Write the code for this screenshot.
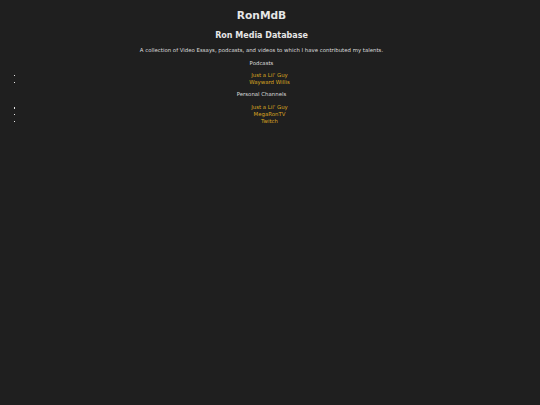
import React from "react";

function Item({ children }: { children: React.ReactNode }) {
  return (
    <li className="relative before:absolute before:left-[-2.5px] before:top-[3px] before:h-[1.5px] before:w-[1.5px] before:bg-[#e6e6e6] before:content-['']">
      <a className="text-[#daa520]">{children}</a>
    </li>
  );
}

export default function App() {
  return (
    <div className="min-h-[405px] bg-[#1f1f1f] text-[#e6e6e6]" style={{ fontFamily: '"DejaVu Sans", Verdana, sans-serif' }}>
      <div className="w-[523px] text-center pt-[10px]">
        <h1 className="text-[10.67px] font-bold leading-[12px]">RonMdB</h1>
        <h2 className="mt-[8.5px] text-[8px] font-bold leading-[10px]">Ron Media Database</h2>
        <p className="mt-[6.5px] text-[5.4px] leading-[7px] text-[#dcdcdc]">A collection of Video Essays, podcasts, and videos to which I have contributed my talents.</p>
        <p className="mt-[5.5px] text-[5.4px] leading-[7px] text-[#dcdcdc]">Podcasts</p>
        <ul className="mt-[5px] list-none pl-[16px] text-[5.4px] leading-[7px]">
          <Item>Just a Lil&apos; Guy</Item>
          <Item>Wayward Willis</Item>
        </ul>
        <p className="mt-[5px] text-[5.4px] leading-[7px] text-[#dcdcdc]">Personal Channels</p>
        <ul className="mt-[6.5px] list-none pl-[16px] text-[5.4px] leading-[6.8px]">
          <Item>Just a Lil&apos; Guy</Item>
          <Item>MegaRonTV</Item>
          <Item>Twitch</Item>
        </ul>
      </div>
    </div>
  );
}
